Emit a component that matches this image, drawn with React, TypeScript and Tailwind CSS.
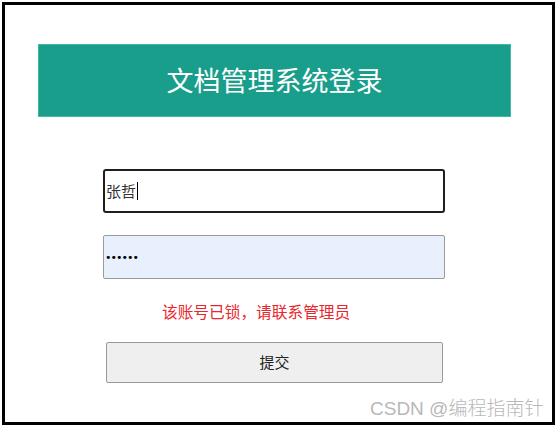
import React from "react";

const cjk = "font-['Microsoft_YaHei','Noto_Sans_CJK_SC',sans-serif]";

const LoginPage = () => {
  return (
    <div className="relative h-[428px] w-[558px] overflow-hidden bg-white">
      <div className="ml-[2px] mt-[2px] flex h-[423px] w-[553px] flex-col border-[3px] border-black">
        {/* header */}
        <div
          className={`ml-[33px] mt-[39px] flex h-[73px] w-[473px] shrink-0 items-center justify-center border border-[#3fb8a8] bg-[#1a9e8c] text-[27px] text-white ${cjk}`}
        >
          文档管理系统登录
        </div>

        {/* username */}
        <div
          className={`ml-[98px] mt-[52px] flex h-[44px] w-[342px] shrink-0 items-center rounded-[3px] border-2 border-[#1f1f1f] bg-white pl-[1px] text-[15px] text-[#333] ${cjk}`}
        >
          张哲
          <span className="ml-[1px] h-[18px] w-px bg-black" />
        </div>

        {/* password */}
        <div className="ml-[98px] mt-[22px] flex h-[44px] w-[342px] shrink-0 items-center rounded-[2px] border border-[#9a9a9a] bg-[#e8f0fe] pl-[1px]">
          <span className="text-[11px] leading-none tracking-[-1px] text-black font-['DejaVu_Sans',sans-serif]">
            ••••••
          </span>
        </div>

        {/* error */}
        <p
          className={`ml-[157px] mt-[23px] h-[20px] shrink-0 text-[15.7px] leading-[20px] text-[#e8262b] ${cjk}`}
        >
          该账号已锁，请联系管理员
        </p>

        {/* submit */}
        <button
          className={`ml-[101px] mt-[20px] flex h-[41px] w-[337px] shrink-0 items-center justify-center rounded-[2px] border border-[#9a9a9a] bg-[#efefef] text-[15px] text-[#222] ${cjk}`}
        >
          提交
        </button>
      </div>

      <span className="absolute left-[370px] top-[397px] font-['Liberation_Sans','Noto_Sans_CJK_SC',sans-serif] text-[19px] font-light leading-[24px] text-[#b8b8b8]">
        CSDN @编程指南针
      </span>
    </div>
  );
};

export default function App() {
  return <LoginPage />;
}
